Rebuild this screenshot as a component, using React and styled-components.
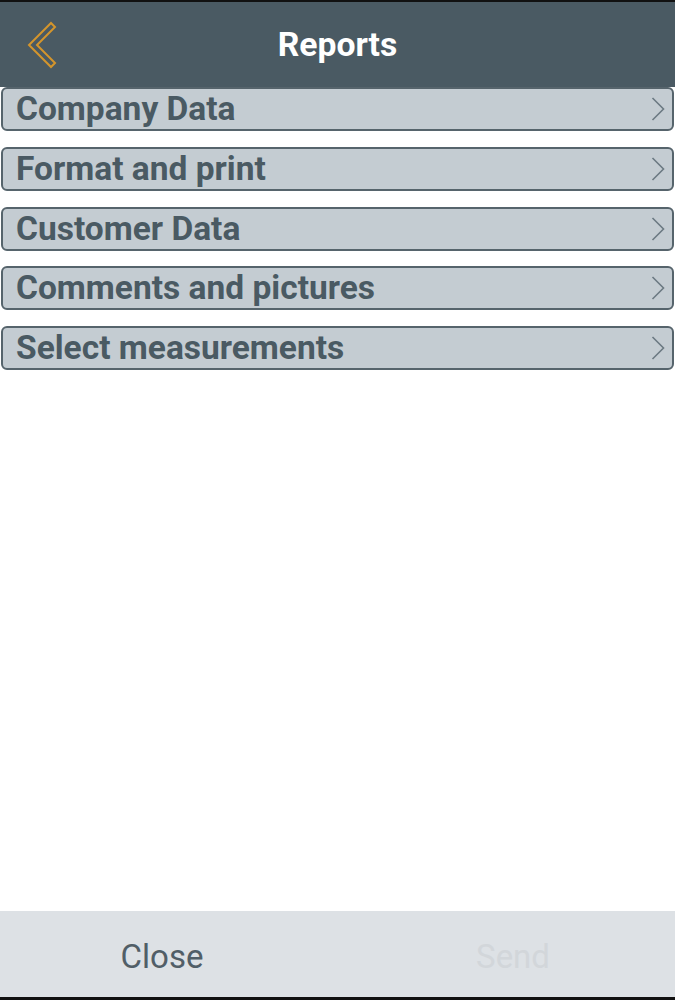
import React from 'react'
import styled, { createGlobalStyle } from 'styled-components'

const GlobalStyle = createGlobalStyle`
  html, body {
    margin: 0;
    padding: 0;
    background: #fff;
    font-family: Roboto, "Liberation Sans", sans-serif;
  }
`

const Screen = styled.div`
  width: 675px;
  height: 1000px;
  box-sizing: border-box;
  border-top: 2px solid #111;
  border-bottom: 3px solid #111;
  display: flex;
  flex-direction: column;
  background: #fff;
  overflow: hidden;
`

const Header = styled.header`
  height: 85px;
  flex-shrink: 0;
  background-color: #4a5a63;
  display: grid;
  grid-template-columns: 1fr auto 1fr;
  align-items: center;
`

const BackButton = styled.button`
  justify-self: start;
  margin-left: 27px;
  padding: 0;
  border: 0;
  background: none;
  display: flex;
  cursor: pointer;
`

const Title = styled.h1`
  margin: 0;
  color: #fff;
  font-size: 33.7px;
  font-weight: 700;
  line-height: 85px;
`

const List = styled.nav`
  display: flex;
  flex-direction: column;
  gap: 15.75px;
  padding: 0 1px;
`

const Row = styled.div`
  height: 44px;
  box-sizing: border-box;
  background-color: #c4ccd2;
  border: 2px solid #56646c;
  border-radius: 6px;
  display: flex;
  align-items: center;
  justify-content: space-between;
  padding: 0 7px 0 13px;
  color: #4a5a63;
  font-size: 33.5px;
  font-weight: 700;
  line-height: 40px;
  cursor: pointer;
`

const Spacer = styled.div`
  flex: 1;
`

const BottomBar = styled.footer`
  height: 86px;
  flex-shrink: 0;
  background-color: #dde1e5;
  display: flex;
  justify-content: space-between;
`

const BarButton = styled.button`
  width: 324px;
  border: 0;
  background: none;
  font-family: Roboto, "Liberation Sans", sans-serif;
  font-size: 33px;
  font-weight: 400;
  color: ${(p) => (p.disabled ? '#d2d6da' : '#515e67')};
  padding: 4px 0 0;
`

const BackIcon = () => (
  <svg width="30" height="48" viewBox="0 0 30 48">
    <path
      d="M24 2 L28 6 L10 24 L28 42 L24 46 L2 24 Z"
      fill="none"
      stroke="#d4952c"
      strokeWidth="2"
      strokeLinejoin="miter"
    />
  </svg>
)

const Chevron = () => (
  <svg width="14" height="24" viewBox="0 0 14 24">
    <path d="M1.5 1 L12.5 12 L1.5 23" fill="none" stroke="#6c7a83" strokeWidth="1.6" />
  </svg>
)

const items = ['Company Data', 'Format and print', 'Customer Data', 'Comments and pictures', 'Select measurements']

const App = () => {
  return (
    <Screen>
      <GlobalStyle />
      <Header>
        <BackButton aria-label="Back">
          <BackIcon />
        </BackButton>
        <Title>Reports</Title>
        <span />
      </Header>
      <List>
        {items.map((label) => (
          <Row key={label}>
            <span>{label}</span>
            <Chevron />
          </Row>
        ))}
      </List>
      <Spacer />
      <BottomBar>
        <BarButton>Close</BarButton>
        <BarButton disabled>Send</BarButton>
      </BottomBar>
    </Screen>
  )
}

export default App
